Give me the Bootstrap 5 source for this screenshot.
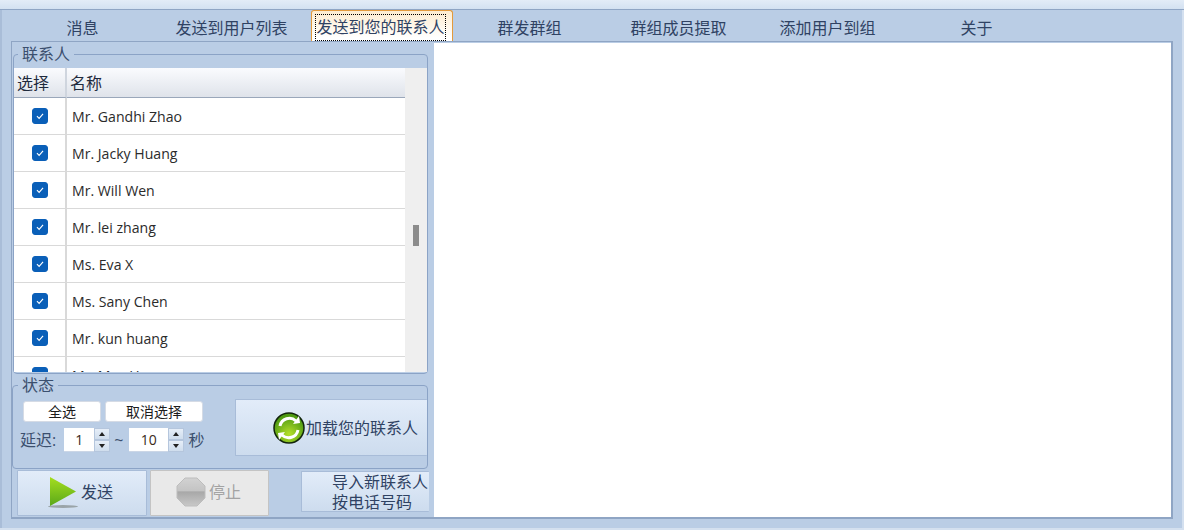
<!DOCTYPE html>
<html lang="zh-Hans">
<head>
  <meta charset="UTF-8">
  <title>发送到您的联系人</title>
  <link href="https://cdn.jsdelivr.net/npm/bootstrap@5.3.0/dist/css/bootstrap.min.css" rel="stylesheet">
  <style>
    html, body { height: 530px; overflow: hidden; }
    body { background: #bacde5; font-family: "Open Sans", "Noto Sans CJK SC", sans-serif; font-size: 16px; color: #2f4263; line-height: 20px; box-shadow: inset -2px -2px 0 #d4e0ef, inset 2px 0 0 #a9bdd8; }
    .top-strip { height: 10px; background: linear-gradient(#e3ecf7, #d3e1f1); border-bottom: 1px solid #8fa5c4; }
    .tab-row { height: 31px; padding-left: 8px; flex-wrap: nowrap; }
    .tab-item { width: 149px; height: 31px; text-align: center; line-height: 36px; }
    .tab-item.is-on { width: 142px; margin: 0 2px 0 5px; height: 31px; line-height: 26px; background: linear-gradient(#fdeccf, #fff 90%); border: 1px solid #e39a3c; border-bottom: 0; border-radius: 3px 3px 0 0; padding: 3px 6px 0 3px; }
    .tab-focus { display: block; height: 27px; border: 1px dotted #000; line-height: 25px; white-space: nowrap; }
    .tab-panel { margin-left: 11px; width: 1162px; height: 478px; border: 1px solid #8fa5c4; border-bottom-width: 2px; border-right-width: 2px; padding-top: 1px; }
    .side-col { width: 422px; flex: none; }
    .white-pane { background: #fff; }
    .grp { border: 1px solid #8ba3c6; border-radius: 4px; margin: 0; min-width: 0; }
    .grp legend { float: none; width: auto; font-size: 16px; line-height: 20px; margin: 0 0 0 4px; padding: 0 4px; color: #3b4f6e; }
    .grp-contacts { margin: 1px 0 0 1px; width: 415px; height: 330px; padding: 4px 0 0; }
    .grp-status { margin: 1px 0 0 0; width: 416px; height: 94px; padding: 0; }
    .grp-status legend { margin-left: 5px; }
    .grid-wrap { height: 304px; overflow: hidden; background: #efefef; }
    .grid-tbl { width: 391px; table-layout: fixed; border-collapse: separate; border-spacing: 0; background: #fff; }
    .grid-tbl th { height: 30px; padding: 0 0 0 3px; font-weight: 400; font-size: 16px; color: #1f2a3d; background: linear-gradient(#fafbfe, #dfe3ea); border-bottom: 1px solid #9aa7ba; border-right: 2px solid #cfd5de; }
    .grid-tbl td { height: 37px; padding: 0; border-bottom: 1px solid #d9d9d9; border-right: 2px solid #d9d9d9; font-size: 14px; color: #2b2b2b; }
    .grid-tbl td.nm { padding: 2px 0 0 5px; border-right: 0; font-size: 14.1px; }
    .grid-tbl th:last-child { border-right: 0; }
    .grid-tbl td:first-child, .grid-tbl th:first-child { width: 53px; }
    .chk, .chk:checked { width: 16px; height: 16px; display: block; margin: 0 auto 1px; border-radius: 3px; background-color: #0a5fb8; border-color: #0a5fb8; opacity: 1; background-image: url("data:image/svg+xml,%3csvg xmlns='http://www.w3.org/2000/svg' viewBox='0 0 16 16'%3e%3cpath d='M4.500 8.200l2.500 2.500 4.500-5' fill='none' stroke='%23fff' stroke-width='1.300'/%3e%3c/svg%3e"); }
    .thumb { right: 8px; top: 157px; width: 6px; height: 21px; background: #8c8c8c; }
    .plain-btn { background: #fff; border: 1px solid #d5dbe5; border-radius: 3px; height: 21px; padding: 0; font-size: 14px; line-height: 19px; color: #1c1c1c; }
    .btn-all { width: 78px; }
    .btn-none { width: 98px; margin-left: 4px; }
    .status-left { margin: 6px 0 0 10px; width: 201px; flex: none; }
    .delay-row { margin: 6px 0 0 -3px; height: 24px; font-size: 16px; color: #3b4f6e; white-space: nowrap; }
    .spin { height: 24px; background: #fff; border-bottom: 1px solid #cbd6e6; font-size: 14px; text-align: center; color: #3a2a1a; line-height: 24px; }
    .spin-a { width: 46px; margin-left: 8px; }
    .spin-b { width: 55px; margin-left: 6px; }
    .spin-val { flex: 1; }
    .spin-btns { width: 16px; flex: none; }
    .spin-up, .spin-dn { height: 12px; background: linear-gradient(#e6eef8, #cfdded); border: 1px solid #b5c6dd; display: flex; align-items: center; justify-content: center; }
    .arr-up { border: 3px solid transparent; border-top: 0; border-bottom: 4px solid #222; }
    .arr-dn { border: 3px solid transparent; border-bottom: 0; border-top: 4px solid #222; }
    .glossy { background: linear-gradient(#e2ecf9, #cddcee); border: 1px solid #a8bcd8; border-radius: 1px; color: #2f4263; padding: 0; font-size: 16px; }
    .load-btn { width: 192px; height: 57px; margin: 4px 0 0 11px; border-right: 0; padding-left: 36px; white-space: nowrap; }
    .foot-row { margin-top: 1px; }
    .send-btn { width: 130px; height: 46px; margin-left: 5px; padding: 0 0 2px 29px; }
    .send-btn svg { margin-left: 1px; margin-right: -1px; }
    .stop-btn { width: 119px; height: 46px; margin-left: 3px; padding: 0 0 2px 25px; background: #e9e9e9; border: 1px solid #c4c4c4; color: #a3a3a3; gap: 3px; }
    .import-btn { width: 128px; height: 41px; margin: 1px 0 0 32px; border-right: 0; text-align: left; padding: 0 0 6px 30px; line-height: 20px; white-space: nowrap; }
  </style>
</head>
<body>
  <div class="top-strip"></div>
  <ul class="nav tab-row">
    <li class="tab-item">消息</li>
    <li class="tab-item">发送到用户列表</li>
    <li class="tab-item is-on"><span class="tab-focus">发送到您的联系人</span></li>
    <li class="tab-item">群发群组</li>
    <li class="tab-item">群组成员提取</li>
    <li class="tab-item">添加用户到组</li>
    <li class="tab-item">关于</li>
  </ul>

  <div class="tab-panel d-flex">
    <div class="side-col">
      <fieldset class="grp grp-contacts">
        <legend>联系人</legend>
        <div class="grid-wrap position-relative">
          <table class="grid-tbl">
            <thead><tr><th>选择</th><th>名称</th></tr></thead>
            <tbody id="rows"></tbody>
          </table>
          <div class="thumb position-absolute"></div>
        </div>
      </fieldset>

      <fieldset class="grp grp-status">
        <legend>状态</legend>
        <div class="d-flex">
          <div class="status-left">
            <div class="d-flex">
              <button type="button" class="plain-btn btn-all">全选</button>
              <button type="button" class="plain-btn btn-none">取消选择</button>
            </div>
            <div class="delay-row d-flex align-items-center">
              <span>延迟:</span>
              <div class="spin spin-a d-flex">
                <span class="spin-val">1</span>
                <div class="spin-btns"><div class="spin-up"><i class="arr-up"></i></div><div class="spin-dn"><i class="arr-dn"></i></div></div>
              </div>
              <span class="ms-1">~</span>
              <div class="spin spin-b d-flex">
                <span class="spin-val">10</span>
                <div class="spin-btns"><div class="spin-up"><i class="arr-up"></i></div><div class="spin-dn"><i class="arr-dn"></i></div></div>
              </div>
              <span class="ms-1">秒</span>
            </div>
          </div>
          <button type="button" class="glossy load-btn d-flex align-items-center">
            <svg width="34" height="34" viewBox="0 0 34 34">
              <defs>
                <radialGradient id="ballFill" cx="50%" cy="70%" r="60%"><stop offset="0" stop-color="#b6e02a"/><stop offset="1" stop-color="#4e9a12"/></radialGradient>
              </defs>
              <circle cx="17" cy="17" r="15" fill="url(#ballFill)" stroke="#12240c" stroke-width="1.500"/>
              <path d="M8 15a9.500 9.500 0 0 1 16-5" fill="none" stroke="#fff" stroke-width="3"/>
              <path d="M21 13l7-1-1-7z" fill="#fff"/>
              <path d="M26 19a9.500 9.500 0 0 1-16 5" fill="none" stroke="#fff" stroke-width="3"/>
              <path d="M13 21l-7 1 1 7z" fill="#fff"/>
            </svg>
            <span>加载您的联系人</span>
          </button>
        </div>
      </fieldset>

      <div class="foot-row d-flex align-items-start">
        <button type="button" class="glossy send-btn d-flex align-items-center">
          <svg width="34" height="34" viewBox="0 0 34 34">
            <defs><linearGradient id="playFill" x1="0" y1="0" x2="0" y2="1"><stop offset="0" stop-color="#a5de1e"/><stop offset="1" stop-color="#5aa81a"/></linearGradient></defs>
            <ellipse cx="15" cy="31.500" rx="15" ry="1.500" fill="#9aa4a8"/>
            <path d="M2 2L28 16.500L2 31z" fill="url(#playFill)"/>
          </svg>
          <span>发送</span>
        </button>
        <button type="button" class="glossy stop-btn d-flex align-items-center">
          <svg width="30" height="30" viewBox="0 0 30 30">
            <defs><linearGradient id="stopFill" x1="0" y1="0" x2="0" y2="1"><stop offset="0" stop-color="#d2d2d2"/><stop offset=".45" stop-color="#c4c4c4"/><stop offset=".5" stop-color="#a8a8a8"/><stop offset="1" stop-color="#c8c8c8"/></linearGradient></defs>
            <path d="M9 1h12l8 8v12l-8 8H9l-8-8V9z" fill="url(#stopFill)" stroke="#bdbdbd"/>
          </svg>
          <span>停止</span>
        </button>
        <button type="button" class="glossy import-btn">导入新联系人<br>按电话号码</button>
      </div>
    </div>
    <div class="white-pane flex-grow-1"></div>
  </div>

  <script>
    const names = ['Mr. Gandhi Zhao', 'Mr. Jacky Huang', 'Mr. Will Wen', 'Mr. lei zhang', 'Ms. Eva X', 'Ms. Sany Chen', 'Mr. kun huang', 'Mr. Max Hu'];
    document.getElementById('rows').innerHTML = names.map(n =>
      `<tr><td><input class="form-check-input chk" type="checkbox" checked></td><td class="nm">${n}</td></tr>`).join('');
  </script>
  <script src="https://cdn.jsdelivr.net/npm/bootstrap@5.3.0/dist/js/bootstrap.bundle.min.js"></script>
</body>
</html>
